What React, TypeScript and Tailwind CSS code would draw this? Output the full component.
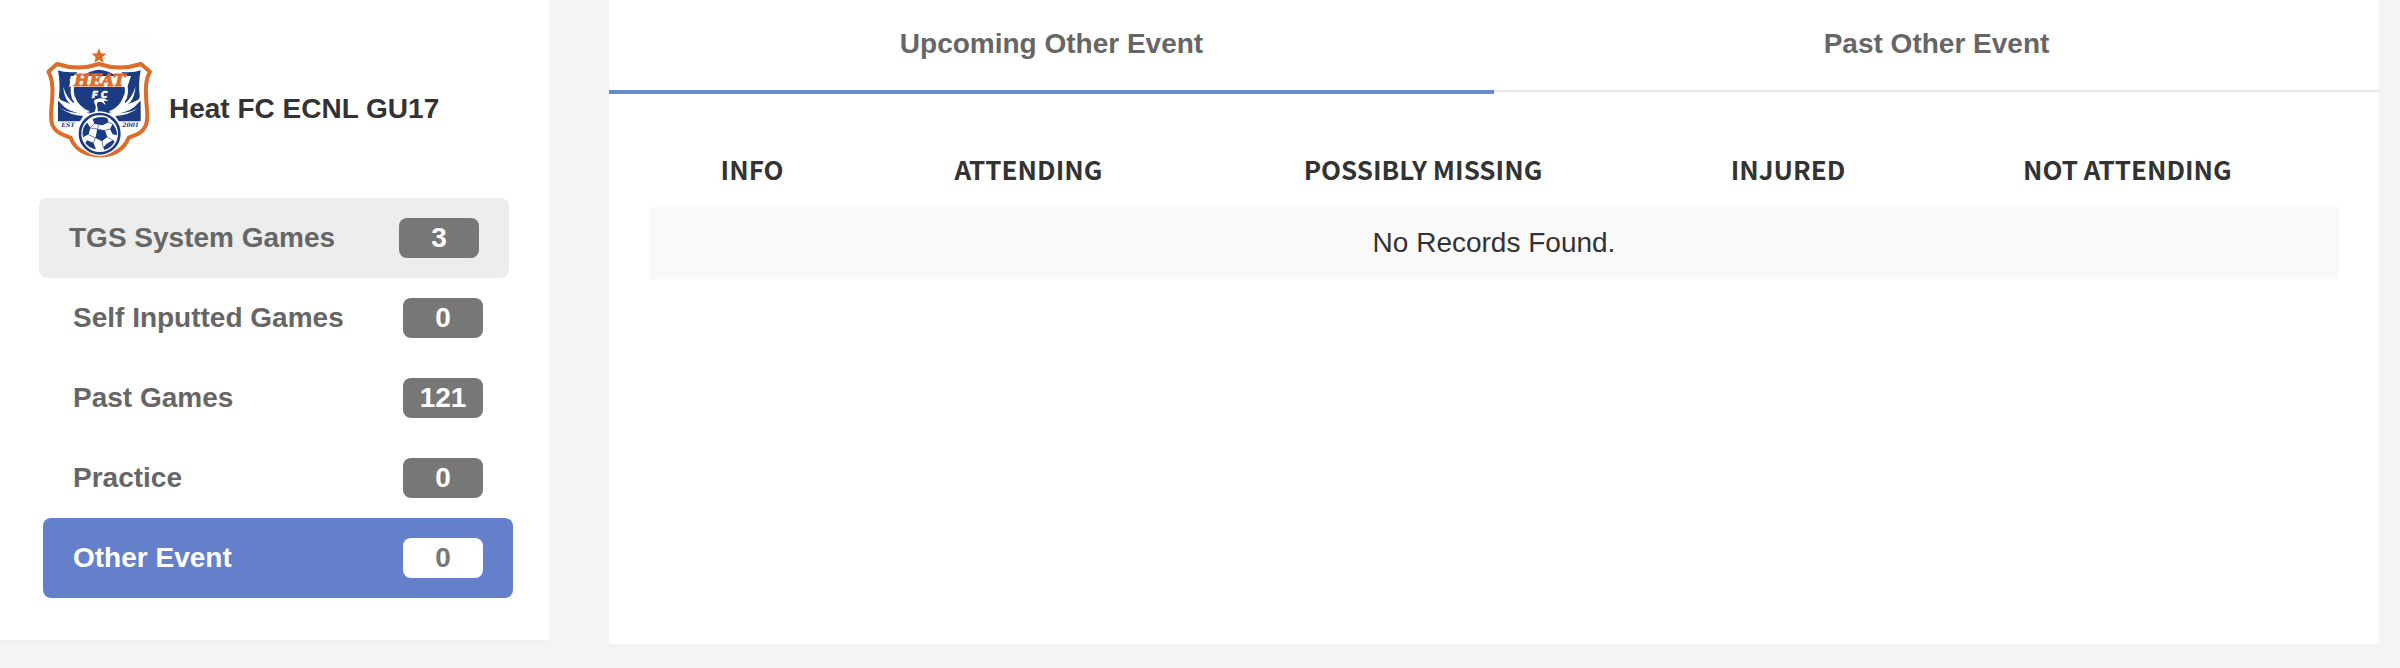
import { useState } from 'react';
import clsx from 'clsx';

const menuItems = [
    { name: 'TGS System Games', count: 3 },
    { name: 'Self Inputted Games', count: 0 },
    { name: 'Past Games', count: 121 },
    { name: 'Practice', count: 0 },
    { name: 'Other Event', count: 0 },
];

const columns = [
    { name: 'Info', width: 'w-[12.2%]' },
    { name: 'Attending', width: 'w-[20.5%]' },
    { name: 'Possibly Missing', width: 'w-[26.2%]' },
    { name: 'Injured', width: 'w-[17%]' },
    { name: 'Not Attending', width: 'w-[24.1%] pr-4' },
];

// one wing, drawn on the left and mirrored for the right
function Wing() {
    return (
        <g>
            <path d="M84 121Q104 129 142 126L118 150L138 178L130 226L86 208Q92 160 84 121Z" fill="#1b3c82" />
            <path d="M84 212L112 236L161 256L150 274H84Z" fill="#1b3c82" />
            <path d="M148 140Q124 165 134 200Q145 226 172 241Q140 232 126 206Q114 172 136 144Z" fill="#fff" />
            <path d="M100 170Q108 202 136 224Q158 239 180 243L172 247Q137 241 115 216Q101 198 100 170Z" fill="#fff" />
            <path d="M84 197Q99 225 125 238Q152 249 180 247L170 252Q128 250 104 232Q88 218 84 197Z" fill="#fff" />
            <path d="M92 235Q124 253 176 251L160 258Q122 257 92 235Z" fill="#fff" />
        </g>
    );
}

function TeamLogo() {
    return (
        <svg viewBox="27 24 354 390" className="w-[118px] h-[130px] shrink-0" role="img" aria-label="Heat FC">
            <rect x="27" y="24" width="354" height="390" fill="#fefefe" />
            <path d="M207 55l6 15 16 1-12 11 4 16-14-9-14 9 4-16-12-11 16-1z" fill="#dd6c2b" />
            {/* shield */}
            <path
                d="M81 102Q145 123 207 102Q269 123 333 102L360 125Q345 150 348 194C349 239 357 258 348 285C338 310 318 314 296 323C282 358 252 376 209 376C166 376 134 358 122 323C98 314 78 309 67 285C58 258 66 239 67 194Q70 150 55 125Z"
                fill="#fff" stroke="#dd6c2b" strokeWidth="12" strokeLinejoin="round"
            />
            <path d="M157 139Q180 121 207 119Q236 121 260 139L284 175Q284 218 241 250L173 250Q130 218 132 175Z" fill="#1b3c82" />
            <Wing />
            <g transform="matrix(-1 0 0 1 416 0)">
                <Wing />
            </g>
            {/* bird */}
            <path d="M190 251Q201 237 195 223Q187 210 200 207Q214 203 226 207L236 213L221 212L228 226L215 216L205 216Q198 220 203 233Q205 243 200 253Z" fill="#fff" />
            <path d="M122 138H303L292 171H118Z" fill="#fff" />
            <text x="209" y="169" textAnchor="middle" fontSize="48" fontWeight="900" fontStyle="italic" fill="#dd6c2b" stroke="#dd6c2b" strokeWidth="3" className="font-['DejaVu_Serif',serif]">HEAT</text>
            <text x="209" y="203" textAnchor="middle" fontSize="26" fontWeight="900" fontStyle="italic" fill="#fff" stroke="#fff" strokeWidth="2" className="font-['DejaVu_Sans',sans-serif]">F C</text>
            <text x="114" y="291" textAnchor="middle" fontSize="18" fontWeight="700" fontStyle="italic" fill="#1b3c82" className="font-['DejaVu_Serif',serif]">EST</text>
            <text x="302" y="291" textAnchor="middle" fontSize="18" fontWeight="700" fontStyle="italic" fill="#1b3c82" className="font-['DejaVu_Serif',serif]">2001</text>
            {/* ball */}
            <circle cx="209" cy="311" r="67" fill="#fff" />
            <circle cx="209" cy="311" r="59" fill="#fff" stroke="#1b3c82" strokeWidth="8" />
            <g fill="#1b3c82">
                <path d="M202 297L225 301L232 321L216 334L196 324Z" />
                <path d="M188 267Q208 257 232 264L236 277L218 286L193 282Z" />
                <path d="M160 294Q163 285 172 278L181 293L176 313L159 322Q156 308 160 294Z" />
                <path d="M248 281Q262 297 261 316L248 313L240 297Z" />
                <path d="M171 331L190 338L198 358Q177 355 166 339Z" />
                <path d="M230 341L249 330L254 335Q243 354 223 360L220 352Z" />
            </g>
            <path d="M206 285L202 298M180 294L202 297M176 314L196 324M216 334L220 353M232 321L249 331M225 301L240 297M196 324L190 339M236 277L248 282M193 282L181 293" fill="none" stroke="#1b3c82" strokeWidth="2" />
        </svg>
    );
}

export default function App() {
    const [selected, setSelected] = useState('Other Event');
    const [tab, setTab] = useState('Upcoming');

    return (
        <div className="flex items-start min-h-screen bg-[#f4f4f4] pr-[21px] font-['Liberation_Sans',Arial,sans-serif] text-[28px] leading-8 text-[#333]">
            <aside className="w-[549px] shrink-0 bg-white border-b-4 border-[#f1f1f1] pt-[38px] pb-[42px] pl-[39px] pr-9">
                <div className="flex items-center gap-3 mb-[30px]">
                    <TeamLogo />
                    <h1 className="font-bold pt-3">Heat FC ECNL GU17</h1>
                </div>

                <nav>
                    {menuItems.map((item, i) => (
                        <button
                            key={item.name}
                            onClick={() => setSelected(item.name)}
                            className={clsx(
                                'flex items-center justify-between w-[470px] h-20 px-[30px] rounded-lg font-bold text-left',
                                i > 0 && 'ml-1',
                                selected === item.name ? 'bg-[#6480ca] text-white' : 'text-[#666]',
                                i === 0 && selected !== item.name && 'bg-[#ededed]'
                            )}
                        >
                            {item.name}
                            <span className={clsx('w-20 h-10 rounded-lg text-center leading-10', selected === item.name ? 'bg-white text-[#777]' : 'bg-[#777] text-white')}>
                                {item.count}
                            </span>
                        </button>
                    ))}
                </nav>
            </aside>

            <main className="flex-1 ml-[60px] min-h-[648px] bg-white border-b-4 border-[#f2f2f2]">
                <div className="grid grid-cols-2 items-start h-[94px]">
                    {['Upcoming', 'Past'].map((name) => (
                        <button
                            key={name}
                            onClick={() => setTab(name)}
                            className={clsx('pt-7 font-bold text-[#666]', tab === name ? 'h-[94px] pb-[30px] border-b-4 border-[#688bcb]' : 'h-[92px] pb-[30px] border-b-2 border-[#e8e8e8]')}
                        >
                            {name} Other Event
                        </button>
                    ))}
                </div>

                <div className="px-10 pt-9">
                    <table className="w-full table-fixed text-center">
                        <thead>
                            <tr className="h-[77px] font-['Noto_Sans_CJK_SC',sans-serif] text-[26px]">
                                {columns.map((col) => (
                                    <th key={col.name} className={clsx('font-bold uppercase', col.width)}>{col.name}</th>
                                ))}
                            </tr>
                        </thead>
                        <tbody>
                            <tr className="h-[72px] bg-[#f9f9f9]">
                                <td colSpan={5}>No Records Found.</td>
                            </tr>
                        </tbody>
                    </table>
                </div>
            </main>
        </div>
    );
}
